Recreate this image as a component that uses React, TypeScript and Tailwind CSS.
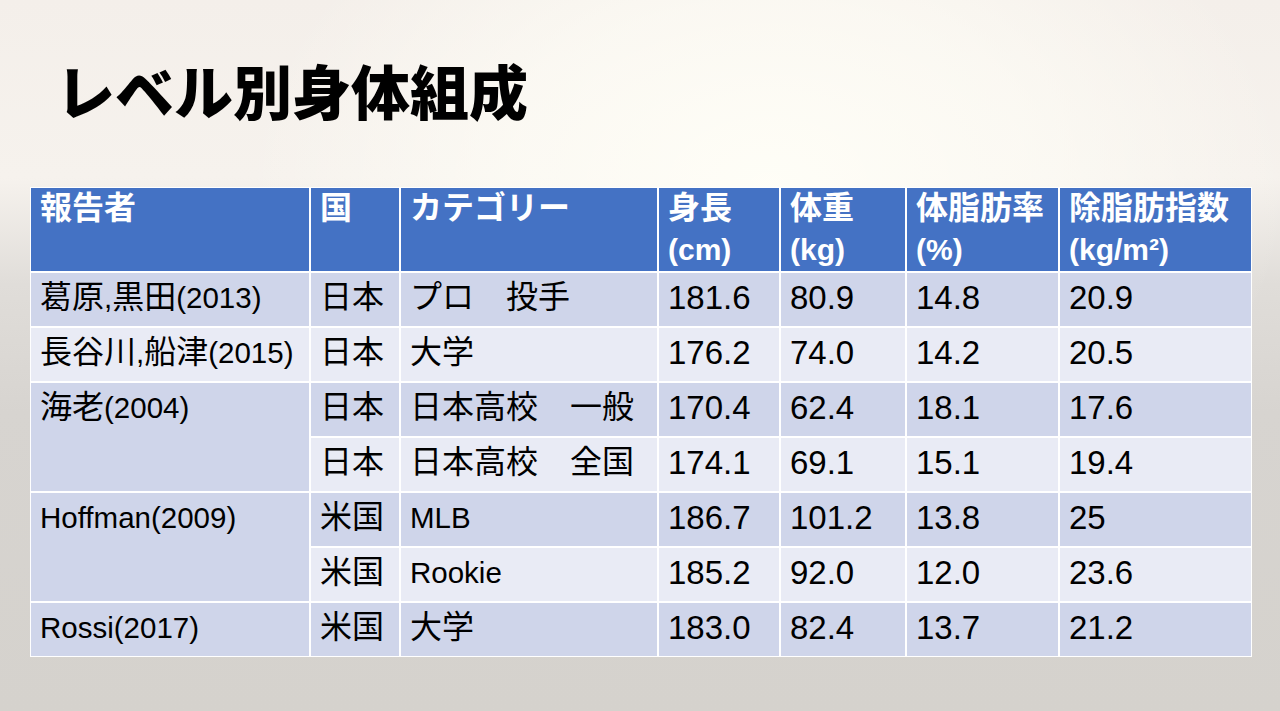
import React from "react";

type Cell = { text: string; span?: boolean };

const ODD = "bg-[#cfd5ea]";
const EVEN = "bg-[#e9ebf5]";

const rows: { tone: string; cells: Cell[] }[] = [
  { tone: ODD, cells: [{ text: "葛原,黒田(2013)" }, { text: "日本" }, { text: "プロ　投手" }, { text: "181.6" }, { text: "80.9" }, { text: "14.8" }, { text: "20.9" }] },
  { tone: EVEN, cells: [{ text: "長谷川,船津(2015)" }, { text: "日本" }, { text: "大学" }, { text: "176.2" }, { text: "74.0" }, { text: "14.2" }, { text: "20.5" }] },
  { tone: ODD, cells: [{ text: "海老(2004)", span: true }, { text: "日本" }, { text: "日本高校　一般" }, { text: "170.4" }, { text: "62.4" }, { text: "18.1" }, { text: "17.6" }] },
  { tone: EVEN, cells: [{ text: "日本" }, { text: "日本高校　全国" }, { text: "174.1" }, { text: "69.1" }, { text: "15.1" }, { text: "19.4" }] },
  { tone: ODD, cells: [{ text: "Hoffman(2009)", span: true }, { text: "米国" }, { text: "MLB" }, { text: "186.7" }, { text: "101.2" }, { text: "13.8" }, { text: "25" }] },
  { tone: EVEN, cells: [{ text: "米国" }, { text: "Rookie" }, { text: "185.2" }, { text: "92.0" }, { text: "12.0" }, { text: "23.6" }] },
  { tone: ODD, cells: [{ text: "Rossi(2017)" }, { text: "米国" }, { text: "大学" }, { text: "183.0" }, { text: "82.4" }, { text: "13.7" }, { text: "21.2" }] },
];

const headers: [string, string?][] = [
  ["報告者"],
  ["国"],
  ["カテゴリー"],
  ["身長", "(cm)"],
  ["体重", "(kg)"],
  ["体脂肪率", "(%)"],
  ["除脂肪指数", "(kg/m²)"],
];

function Mixed({ text }: { text: string }) {
  const parts = text.match(/[\x20-\x7e]+|[^\x20-\x7e]+/g) || [];
  return (
    <>
      {parts.map((p, i) =>
        /^[\x20-\x7e]+$/.test(p) ? (
          <span key={i} className="text-[29.5px]">
            {p}
          </span>
        ) : (
          <span key={i}>{p}</span>
        )
      )}
    </>
  );
}

export default function App() {
  return (
    <div className="relative h-[711px] w-full overflow-hidden bg-[radial-gradient(ellipse_at_60%_26%,rgba(255,254,247,0.97)_0%,rgba(255,254,247,0.6)_25%,rgba(255,254,247,0)_48%),linear-gradient(180deg,#f4efea_0%,#f6f2ed_25%,#e0ddd9_40%,#d7d4d0_58%,#d5d2cd_100%)]">
      <div className="flex flex-col">
        <h1 className="pl-[56px] pt-[60px] font-['Noto_Sans_CJK_JP',sans-serif] text-[59px] font-black leading-none text-black">
          レベル別身体組成
        </h1>
        <div className="ml-[30px] mt-[68px] grid w-[1222px] grid-cols-[278px_88px_256px_120px_124px_151px_191px] grid-rows-[83px_repeat(7,53px)] gap-[2px] bg-white p-px font-['Liberation_Sans','Noto_Sans_CJK_JP',sans-serif] text-[32px] leading-[41px] text-black">
          {headers.map(([a, b], i) => (
            <div key={"h" + i} className="bg-[#4472c4] pl-[9px] pt-0 font-bold text-white">
              <div>{a}</div>
              {b && <div className="text-[30px]">{b}</div>}
            </div>
          ))}
          {rows.map((r, ri) =>
            r.cells.map((c, ci) => {
              const numeric = ci >= r.cells.length - 4;
              return (
                <div
                  key={ri + "-" + ci}
                  className={`${c.span ? "row-span-2 " + ODD : r.tone} whitespace-nowrap pl-[9px] pt-[4px] ${numeric ? "text-[33px]" : ""}`}
                >
                  {numeric ? c.text : <Mixed text={c.text} />}
                </div>
              );
            })
          )}
        </div>
      </div>
    </div>
  );
}
